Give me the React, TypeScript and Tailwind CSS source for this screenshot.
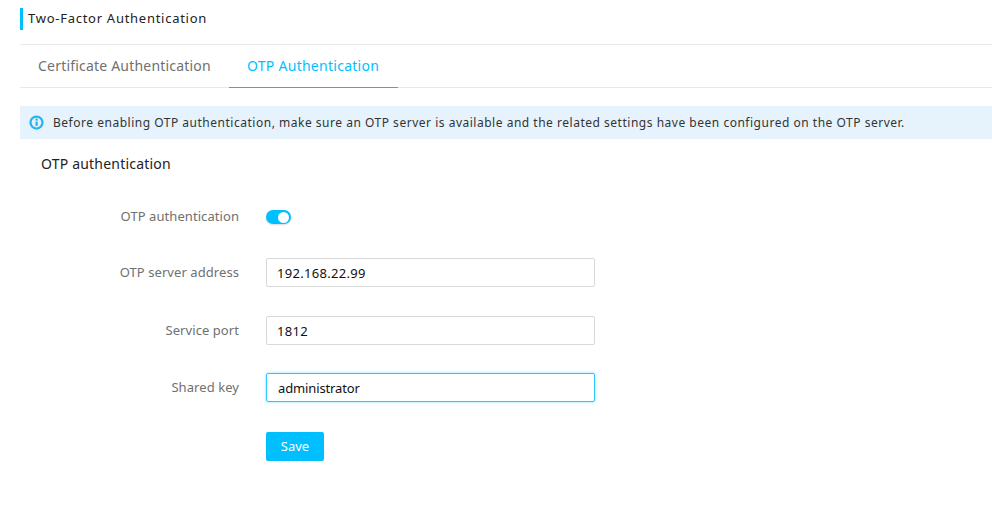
import { useState } from 'react';

const FONT = "font-['Noto_Sans','Open_Sans',sans-serif]";

function Field({ label, value, focused, className }: { label: string; value: string; focused?: boolean; className: string }) {
  return (
    <div className={`flex items-center ${className}`}>
      <label className="w-[219px] shrink-0 text-right text-[13px] tracking-[0.07px] text-[#707070]">{label}</label>
      <input
        readOnly
        value={value}
        className={
          focused
            ? 'ml-[27px] h-[29px] w-[329px] rounded-[2px] border border-[#2cc8fa] px-[11px] text-[13px] tracking-[-0.13px] text-[#111] shadow-[0_0_3px_rgba(0,191,255,0.5)] outline-none'
            : 'ml-[27px] h-[29px] w-[329px] rounded-[2px] border border-[#d9d9d9] px-[10px] text-[13px] tracking-[0.3px] text-[#111] outline-none'
        }
      />
    </div>
  );
}

export default function App() {
  const [enabled, setEnabled] = useState(true);

  return (
    <div className={`${FONT} h-[526px] w-[992px] overflow-hidden bg-white pl-5 antialiased`}>
      <div className="flex h-[45px] items-start border-b border-[#e8e8e8] pt-2">
        <span className="h-[22px] w-[3px] bg-[#00bfff]" />
        <h1 className="ml-[5px] whitespace-nowrap text-[13px] leading-[21px] tracking-[0.73px] text-[#222]">Two-Factor Authentication</h1>
      </div>

      <div className="flex h-[43px] border-b border-[#e8e8e8] text-sm">
        <button className="w-[209px] whitespace-nowrap pl-[18px] text-left tracking-[0.2px] text-[#707070]">Certificate Authentication</button>
        <button className="-mb-px w-[169px] whitespace-nowrap border-b border-[#00bfff] pl-[18px] text-left tracking-[0.27px] text-[#00bfff]">OTP Authentication</button>
      </div>

      <div className="mt-[18px] flex h-[33px] items-center bg-[#e6f3fd] pl-[9px]">
        <svg viewBox="0 0 16 16" className="h-[15px] w-[15px] shrink-0">
          <circle cx="8" cy="8" r="6.4" fill="none" stroke="#1fb6f5" strokeWidth="2.4" />
          <rect x="6.9" y="7" width="2.4" height="4.6" fill="#1fb6f5" />
          <rect x="6.9" y="3.8" width="2.4" height="2.2" fill="#1fb6f5" />
        </svg>
        <p className="ml-[9px] whitespace-nowrap text-xs tracking-[0.515px] text-[#333]">
          Before enabling OTP authentication, make sure an OTP server is available and the related settings have been configured on the OTP server.
        </p>
      </div>

      <h2 className="mt-[15px] pl-[21px] text-sm leading-[20px] tracking-[0.2px] text-[#222]">OTP authentication</h2>

      <div className="mt-[33px] flex flex-col">
        <div className="flex h-[20px] items-center">
          <span className="w-[219px] shrink-0 text-right text-[13px] tracking-[0.07px] text-[#707070]">OTP authentication</span>
          <button
            onClick={() => setEnabled(!enabled)}
            className="ml-[27px] flex h-[14px] w-[25px] items-center justify-end rounded-full bg-[#00bfff] pr-[2px] shadow-[0_1px_2px_rgba(0,0,0,0.15)]"
          >
            <span className="h-[11px] w-[11px] rounded-full bg-white" />
          </button>
        </div>
        <Field className="mt-[31px]" label="OTP server address" value="192.168.22.99" />
        <Field className="mt-[29px]" label="Service port" value="1812" />
        <Field className="mt-[28px]" label="Shared key" value="administrator" focused />
        <button className="ml-[246px] mt-[30px] h-[29px] w-[58px] rounded-[2px] bg-[#00bfff] text-[13px] text-white">Save</button>
      </div>
    </div>
  );
}
